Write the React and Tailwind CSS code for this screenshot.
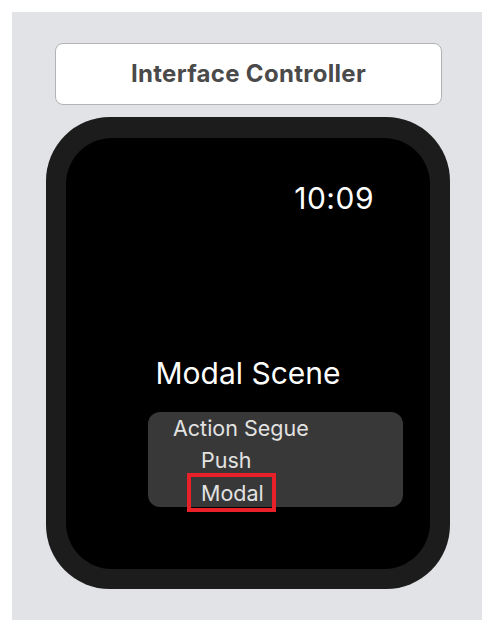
import React from 'react';

const font = { fontFamily: 'Inter, "Noto Sans", sans-serif' };

const SegueMenu = () => (
  <div className="ml-[82px] mt-[21px] w-[255px] h-[95px] rounded-[12px] bg-[#383838] text-[21.5px] leading-[32px] text-[#e2e2e2]">
    <div className="pl-[25px]">Action Segue</div>
    <div className="pl-[53px]">Push</div>
    {/* selected segue gets the red outline */}
    <div className="ml-[39px] w-[89px] h-[39px] -mt-[3px] border-[4px] border-[#e8202a] pl-[10px] leading-[32px]">
      Modal
    </div>
  </div>
);

const Watch = () => (
  <div className="ml-[34px] mt-[12px] w-[404px] h-[472px] rounded-[64px] bg-[#1c1c1c] px-[20px] pt-[21px] pb-[20px]">
    <div className="w-full h-full rounded-[46px] bg-black flex flex-col">
      <div className="mt-[42px] pr-[56px] text-right text-[30px] leading-[36px] tracking-[0.5px] text-white">10:09</div>
      <div className="mt-[139px] text-center text-[30px] leading-[36px] text-white">Modal Scene</div>
      <SegueMenu />
    </div>
  </div>
);

export default function App() {
  return (
    <div className="min-h-screen bg-white p-[12px]" style={font}>
      <div className="w-[470px] h-[608px] bg-[#e2e3e7] pt-[31px]">
        <div className="ml-[43px] w-[387px] h-[62px] rounded-[8px] border-[1.5px] border-[#b3b3b3] bg-white flex items-center justify-center">
          <span className="text-[24px] font-bold tracking-[0.3px] text-[#4a4a4a]">Interface Controller</span>
        </div>
        <Watch />
      </div>
    </div>
  );
}
